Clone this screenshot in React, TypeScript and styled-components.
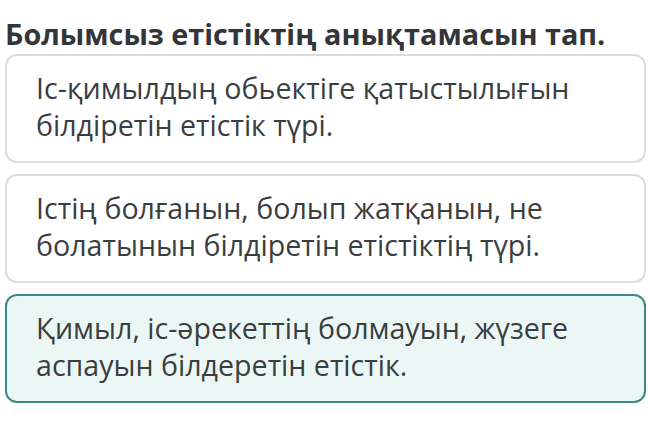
import styled, { createGlobalStyle } from 'styled-components'

const answers = [
  { text: 'Іс-қимылдың обьектіге қатыстылығын білдіретін етістік түрі.', selected: false },
  { text: 'Істің болғанын, болып жатқанын, не болатынын білдіретін етістіктің түрі.', selected: false },
  { text: 'Қимыл, іс-әрекеттің болмауын, жүзеге аспауын білдеретін етістік.', selected: true },
]

export default function App() {
  return (
    <>
      <GlobalStyle />
      <Page>
        <Question>Болымсыз етістіктің анықтамасын тап.</Question>
        <AnswerList>
          {answers.map(a => (
            <Answer key={a.text} $selected={a.selected}>
              {a.text}
            </Answer>
          ))}
        </AnswerList>
      </Page>
    </>
  )
}

const GlobalStyle = createGlobalStyle`
  body {
    margin: 0;
    background: #ffffff;
    font-family: 'Open Sans', 'Noto Sans', sans-serif;
  }
`

const Page = styled.div`
  width: 648px;
  height: 439px;
  overflow: hidden;
  padding: 15px 0 0 5px;
  box-sizing: border-box;
`

const Question = styled.h1`
  margin: 0;
  font-size: 28.8px;
  line-height: 38px;
  font-weight: 700;
  color: #333538;
  white-space: nowrap;
`

const AnswerList = styled.div`
  display: flex;
  flex-direction: column;
  gap: 11px;
  margin-top: 1px;
  width: 641px;
`

const Answer = styled.div<{ $selected: boolean }>`
  box-sizing: border-box;
  min-height: 109px;
  padding: 13px 24px 15px 29px;
  border: 2px solid ${p => (p.$selected ? '#3e8a80' : '#dddddd')};
  border-radius: 12px;
  background: ${p => (p.$selected ? '#ebf7f4' : '#ffffff')};
  font-size: 28.6px;
  line-height: 37px;
  color: #3b3e41;
`
